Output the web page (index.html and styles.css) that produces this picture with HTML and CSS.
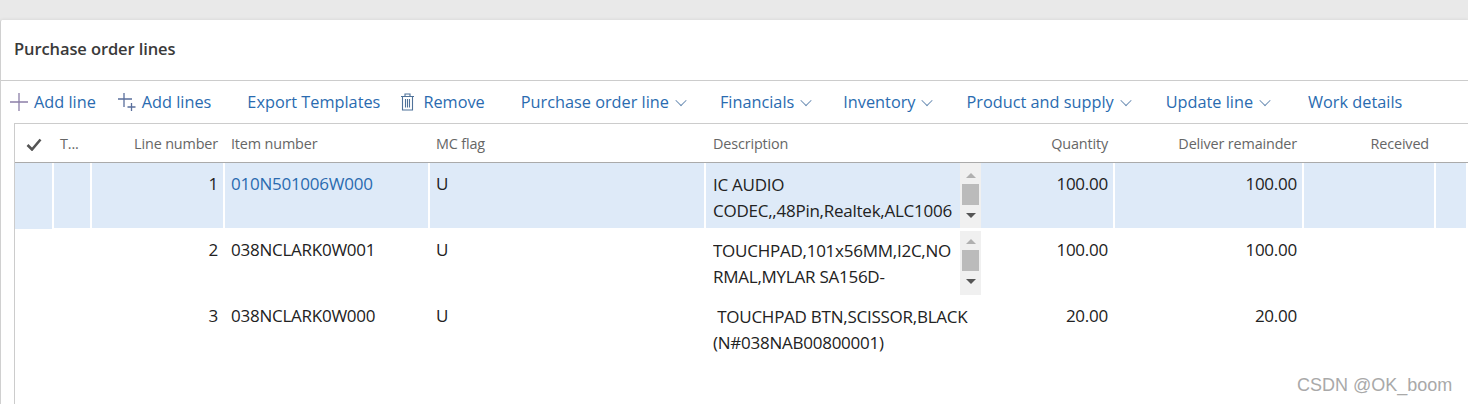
FILE: index.html
```html
<!DOCTYPE html>
<html lang="en">
<head>
    <meta charset="UTF-8">
    <title>Purchase order lines</title>
    <link rel="stylesheet" href="styles.css">
</head>
<body>
    <div class="panel">
        <h1 class="panel-title">Purchase order lines</h1>
        <div class="toolbar">
            <a class="tool tool-add">
                <svg class="ico-plus" width="18" height="18" viewBox="0 0 18 18"><path d="M9 0v18M0 9h18" stroke="#8c7fa8" stroke-width="1.300" fill="none"/></svg>
                Add line
            </a>
            <a class="tool tool-addm">
                <svg class="ico-plus" width="18" height="18" viewBox="0 0 18 18"><path d="M6 0v14M0 6h14M13.500 10v8M9.500 14h8" stroke="#5a6f9c" stroke-width="1.300" fill="none"/></svg>
                Add lines
            </a>
            <a class="tool tool-export">Export Templates</a>
            <a class="tool tool-remove">
                <svg width="15" height="18" viewBox="0 0 15 18"><path d="M1 3.500h13M5 3.500V1h5v2.500M2.500 3.500v13.500h10V3.500M5.500 6v8.500M7.500 6v8.500M9.500 6v8.500" stroke="#4f7299" stroke-width="1.100" fill="none"/></svg>
                Remove
            </a>
            <a class="tool tool-po">Purchase order line <span class="chev"></span></a>
            <a class="tool tool-fin">Financials <span class="chev"></span></a>
            <a class="tool tool-inv">Inventory <span class="chev"></span></a>
            <a class="tool tool-prod">Product and supply <span class="chev"></span></a>
            <a class="tool tool-upd">Update line <span class="chev"></span></a>
            <a class="tool tool-work">Work details</a>
        </div>
        <div class="grid">
            <div class="row head">
                <div class="cell check"><svg width="16" height="13" viewBox="0 0 16 13"><path d="M1.500 7l4.500 4.500L14.500 1.500" stroke="#555" stroke-width="2.600" fill="none"/></svg></div>
                <div class="cell">T...</div>
                <div class="cell num">Line number</div>
                <div class="cell">Item number</div>
                <div class="cell">MC flag</div>
                <div class="cell desc-head">Description</div>
                <div class="cell num">Quantity</div>
                <div class="cell num">Deliver remainder</div>
                <div class="cell num">Received</div>
                <div class="cell"></div>
            </div>
            <div class="row selected">
                <div class="cell"></div>
                <div class="cell"></div>
                <div class="cell num">1</div>
                <div class="cell link">010N501006W000</div>
                <div class="cell">U</div>
                <div class="cell desc">
                    <div class="desc-text">IC AUDIO<br>CODEC,,48Pin,Realtek,ALC1006</div>
                    <div class="scroll"><span class="arrow-up"></span><span class="thumb"></span><span class="arrow-down"></span></div>
                </div>
                <div class="cell num">100.00</div>
                <div class="cell num">100.00</div>
                <div class="cell num"></div>
                <div class="cell"></div>
            </div>
            <div class="row">
                <div class="cell"></div>
                <div class="cell"></div>
                <div class="cell num">2</div>
                <div class="cell">038NCLARK0W001</div>
                <div class="cell">U</div>
                <div class="cell desc">
                    <div class="desc-text">TOUCHPAD,101x56MM,I2C,NO<br>RMAL,MYLAR SA156D-</div>
                    <div class="scroll"><span class="arrow-up"></span><span class="thumb"></span><span class="arrow-down"></span></div>
                </div>
                <div class="cell num">100.00</div>
                <div class="cell num">100.00</div>
                <div class="cell num"></div>
                <div class="cell"></div>
            </div>
            <div class="row">
                <div class="cell"></div>
                <div class="cell"></div>
                <div class="cell num">3</div>
                <div class="cell">038NCLARK0W000</div>
                <div class="cell">U</div>
                <div class="cell desc">
                    <div class="desc-text">&nbsp;TOUCHPAD BTN,SCISSOR,BLACK<br>(N#038NAB00800001)</div>
                </div>
                <div class="cell num">20.00</div>
                <div class="cell num">20.00</div>
                <div class="cell num"></div>
                <div class="cell"></div>
            </div>
        </div>
    </div>
    <div class="watermark">CSDN @OK_boom</div>
</body>
</html>
```

FILE: styles.css
```css
body {
    margin: 0;
    height: 404px;
    overflow: hidden;
    background: #e9e9e9;
    padding-top: 20px;
    box-sizing: border-box;
    font-family: "Open Sans", "Noto Sans", sans-serif;
    color: #222;
}
.panel {
    height: 384px;
    background: #fff;
    border-left: 1px solid #d0d0d0;
    border-radius: 2px 0 0 0;
    box-shadow: 0 -1px 3px rgba(0, 0, 0, 0.06);
    box-sizing: border-box;
}
.panel-title {
    margin: 0;
    height: 61px;
    line-height: 58px;
    padding-left: 13px;
    font-size: 16.5px;
    font-weight: 600;
    color: #3a3a3a;
    border-bottom: 1px solid #ccc;
    letter-spacing: -0.1px;
    box-sizing: border-box;
}
.toolbar {
    display: flex;
    align-items: center;
    height: 42px;
    padding-left: 9px;
    font-size: 16.300px;
    color: #2a6bb0;
    white-space: nowrap;
}
.tool {
    display: flex;
    align-items: center;
    gap: 6px;
}
.tool-addm { margin-left: 22px; }
.tool-export { margin-left: 36px; }
.tool-remove { margin-left: 20px; gap: 8px; }
.tool-po { margin-left: 36px; }
.tool-fin { margin-left: 35px; }
.tool-inv { margin-left: 33px; }
.tool-prod { margin-left: 35px; }
.tool-upd { margin-left: 36px; }
.tool-work { margin-left: 39px; }
.chev {
    width: 7px;
    height: 7px;
    border-right: 1px solid #6d8fb5;
    border-bottom: 1px solid #6d8fb5;
    transform: rotate(45deg) translate(-1px, -1px);
    margin-left: 2px;
}
.grid {
    margin-left: 13px;
    border-left: 1px solid #ccc;
    border-top: 1px solid #ccc;
    height: 281px;
}
.row {
    display: grid;
    grid-template-columns: 39px 38px 133px 205px 276px 277px 132px 189px 132px 1fr;
    height: 66px;
    font-size: 17px;
    letter-spacing: -0.25px;
}
.row.head {
    height: 39px;
    border-bottom: 1px solid #aaa;
    box-sizing: border-box;
    font-size: 14.400px;
    letter-spacing: -0.15px;
    color: #666;
    align-items: center;
}
.cell {
    padding: 9px 5px 0 6px;
    box-sizing: border-box;
    border-right: 2px solid transparent;
    min-width: 0;
    white-space: nowrap;
    overflow: hidden;
}
.head .cell {
    padding-top: 0;
}
.head .check {
    padding: 4px 0 0 11px;
}
.head .desc-head { padding-left: 7px; }
.num { text-align: right; }
.selected .cell {
    background: #deeaf8;
    border-right-color: #fff;
    height: 65px;
}
.selected .cell:first-child { height: 66px; }
.link { color: #2a6bb0; }
.desc {
    display: flex;
    padding: 0 0 0 7px;
    border-right: none;
}
.selected .desc { border-right: none; }
.desc-text {
    flex: 1;
    min-width: 0;
    padding-top: 9px;
    line-height: 26px;
    white-space: normal;
    overflow: hidden;
    box-sizing: border-box;
}
.scroll {
    flex: none;
    width: 21px;
    margin-right: 2px;
    margin-top: 2px;
    background: #f0f0f0;
    display: flex;
    flex-direction: column;
    align-items: center;
    height: 64px;
    padding-top: 8px;
    box-sizing: border-box;
}
.selected .scroll { margin-top: 0; height: 65px; padding-top: 10px; }
.thumb {
    width: 17px;
    height: 21px;
    background: #bbb;
    margin: 6px 0 8px;
}
.arrow-up, .arrow-down {
    width: 0;
    height: 0;
    border-left: 5px solid transparent;
    border-right: 5px solid transparent;
}
.arrow-up { border-bottom: 5px solid #b0b0b0; }
.arrow-down { border-top: 5px solid #555; }
.watermark {
    position: absolute;
    left: 1297px;
    top: 375px;
    font-family: "Liberation Sans", Arial, sans-serif;
    font-size: 18px;
    color: #a9a9a9;
    white-space: nowrap;
}
```
